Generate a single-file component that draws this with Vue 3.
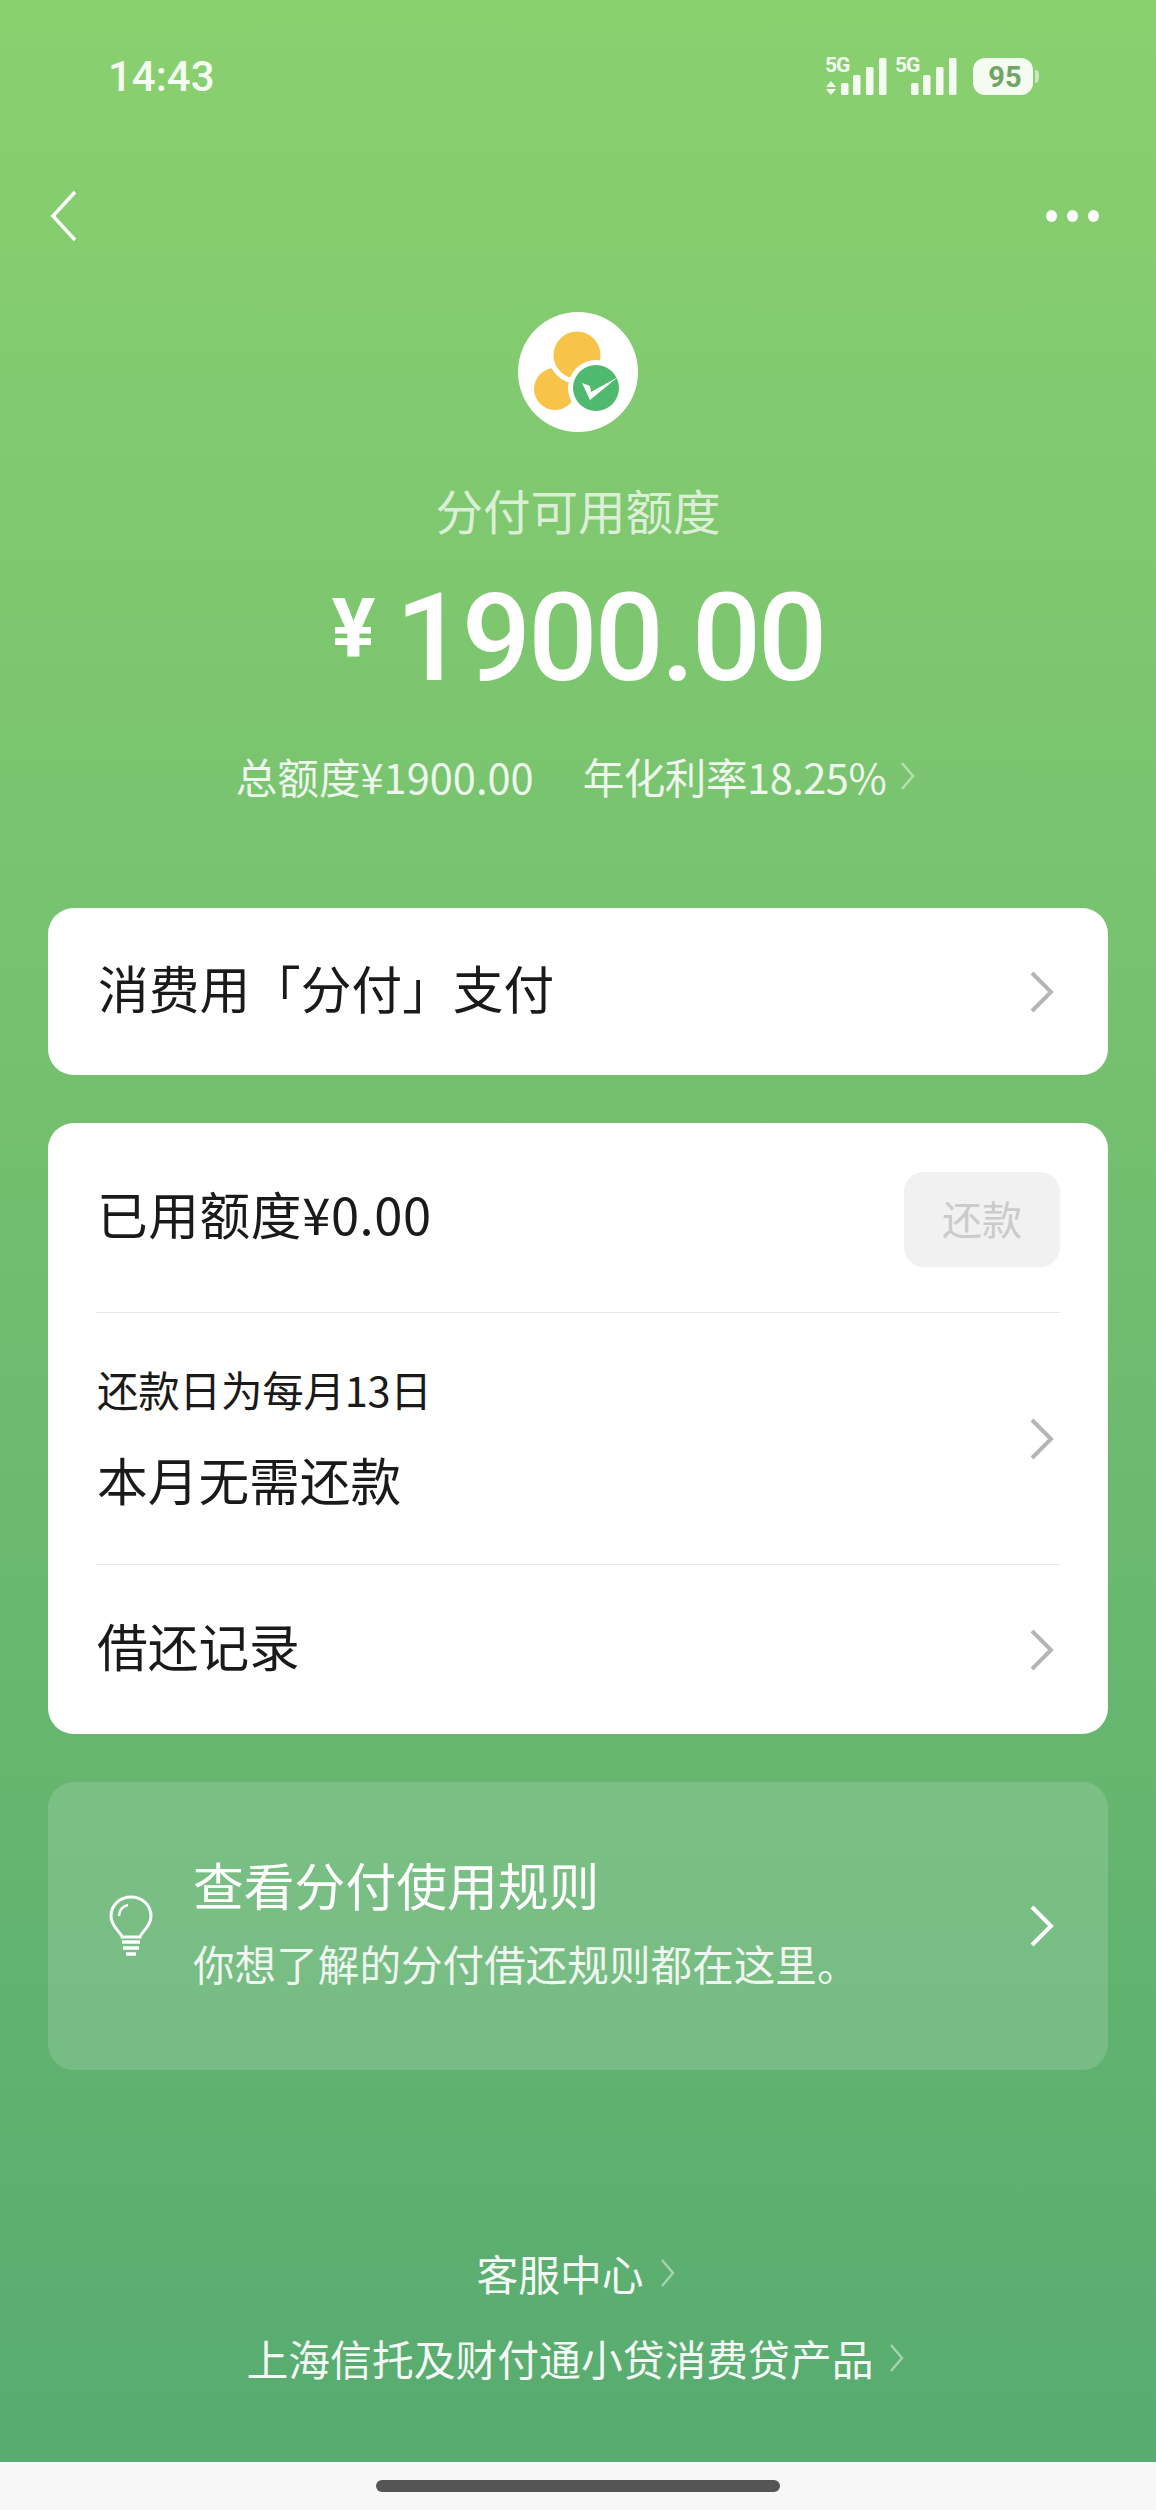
<template>
  <div class="page">
    <div class="hero">
      <div class="status">
        <span class="time">14:43</span>
        <svg class="status-icons" width="218" height="44" viewBox="0 -4 218 44">
          <g fill="#f4fbf0">
            <path d="M7 24l5 6H2zM7 38l5-6H2z" />
            <rect x="17" y="26" width="7.500" height="12" rx="1.500" />
            <rect x="29" y="18" width="7.500" height="20" rx="1.500" />
            <rect x="42" y="10" width="7.500" height="28" rx="1.500" />
            <rect x="55" y="1" width="7.500" height="37" rx="1.500" />
            <rect x="87" y="26" width="7.500" height="12" rx="1.500" />
            <rect x="99" y="18" width="7.500" height="20" rx="1.500" />
            <rect x="112" y="10" width="7.500" height="28" rx="1.500" />
            <rect x="125" y="1" width="7.500" height="37" rx="1.500" />
            <rect x="149" y="1" width="60" height="37" rx="12" />
            <path d="M211 13c3 0 4 2 4 6.500s-1 6.500-4 6.500z" opacity="0.6" />
          </g>
          <text x="1" y="15" class="net">5G</text>
          <text x="71" y="15" class="net">5G</text>
          <text x="181" y="30" class="batt" text-anchor="middle">95</text>
        </svg>
      </div>

      <div class="nav">
        <svg width="32" height="52" viewBox="0 0 32 52">
          <path d="M27 2L5 26l22 24" fill="none" stroke="#fff" stroke-width="3.500" />
        </svg>
        <div class="dots"><i></i><i></i><i></i></div>
      </div>

      <svg class="logo" width="120" height="120" viewBox="0 0 120 120">
        <circle cx="60" cy="60" r="60" fill="#fff" />
        <circle cx="37" cy="77" r="21" fill="#f8c349" />
        <circle cx="59" cy="43" r="26" fill="#f8c349" stroke="#fff" stroke-width="5" />
        <circle cx="78" cy="76" r="28" fill="#fff" />
        <circle cx="78" cy="76" r="23" fill="#4fb96d" />
        <path d="M64 71l8 3 1 6 27-15-28 23z" fill="#fff" />
      </svg>

      <div class="label">分付可用额度</div>
      <div class="amount"><span class="yen">¥</span><span>1900.00</span></div>
      <div class="summary">
        <span>总额度¥1900.00</span>
        <span class="rate">年化利率18.25%</span>
        <svg class="mini" width="16" height="30" viewBox="0 0 16 30">
          <path d="M2 2l11 13L2 28" />
        </svg>
      </div>
    </div>

    <div class="card pay">
      <span class="main">消费用「分付」支付</span>
      <svg class="arrow" width="24" height="42" viewBox="0 0 24 42"><path d="M2 2l19 19L2 40" /></svg>
    </div>

    <div class="card used">
      <div class="row first">
        <span class="main">已用额度¥0.00</span>
        <span class="repay">还款</span>
      </div>
      <div class="row second">
        <div>
          <div class="hint">还款日为每月13日</div>
          <div class="main">本月无需还款</div>
        </div>
        <svg class="arrow" width="24" height="42" viewBox="0 0 24 42"><path d="M2 2l19 19L2 40" /></svg>
      </div>
      <div class="row third">
        <span class="main">借还记录</span>
        <svg class="arrow" width="24" height="42" viewBox="0 0 24 42"><path d="M2 2l19 19L2 40" /></svg>
      </div>
    </div>

    <div class="tip">
      <svg class="bulb" width="46" height="62" viewBox="0 0 46 62" fill="none" stroke="#fff">
        <path d="M14 42c-1-5-11-10-11-21C3 10 12 2 23 2s20 8 20 19c0 11-10 16-11 21z" stroke-width="3" />
        <path d="M11 21c0-6 4-10 9-11" stroke-width="2.500" />
        <path d="M14 47h18M15 53h16" stroke-width="3.500" />
        <path d="M18 59h10" stroke-width="3.500" />
      </svg>
      <div class="tip-text">
        <div class="tip-title">查看分付使用规则</div>
        <div class="tip-sub">你想了解的分付借还规则都在这里。</div>
      </div>
      <svg class="tip-arrow" width="24" height="42" viewBox="0 0 24 42"><path d="M2 2l19 19L2 40" /></svg>
    </div>

    <div class="footer">
      <div class="link">客服中心<svg class="mini" width="16" height="30" viewBox="0 0 16 30"><path d="M2 2l11 13L2 28" /></svg></div>
      <div class="link">上海信托及财付通小贷消费贷产品<svg class="mini" width="16" height="30" viewBox="0 0 16 30"><path d="M2 2l11 13L2 28" /></svg></div>
    </div>

    <div class="home"><i></i></div>
  </div>
</template>

<script setup>
</script>

<style>
html,
body {
  margin: 0;
  background: #f7f7f7;
}
</style>

<style scoped>
.page {
  width: 1156px;
  height: 2510px;
  display: flex;
  flex-direction: column;
  background: linear-gradient(180deg, #8ad06f 0%, #57ab70 100%);
  font-family: "Noto Sans CJK SC", "Noto Sans", sans-serif;
  color: #fff;
  overflow: hidden;
}
.hero {
  display: flex;
  flex-direction: column;
  align-items: center;
  height: 908px;
}
.status {
  align-self: stretch;
  height: 152px;
  padding: 56px 114px 0 108px;
  box-sizing: border-box;
  display: flex;
  justify-content: space-between;
  align-items: flex-start;
}
.time {
  font-family: Roboto, sans-serif;
  font-size: 42px;
  font-weight: 500;
  line-height: 42px;
  color: #f4fbf0;
}
.status-icons {
  margin-top: -3px;
}
.net {
  font-family: Roboto, sans-serif;
  font-size: 21px;
  font-weight: 700;
  letter-spacing: -1px;
  fill: #f4fbf0;
}
.batt {
  font-family: Roboto, sans-serif;
  font-size: 29px;
  font-weight: 700;
  fill: #6fa565;
}
.nav {
  align-self: stretch;
  height: 160px;
  padding: 38px 57px 0 48px;
  box-sizing: border-box;
  display: flex;
  justify-content: space-between;
  align-items: flex-start;
}
.dots {
  display: flex;
  gap: 10px;
  margin-top: 20px;
}
.dots i {
  width: 11px;
  height: 12px;
  border-radius: 50%;
  background: #fff;
}
.logo {
  display: block;
}
.label {
  margin-top: 46px;
  font-size: 47.500px;
  line-height: 64px;
  color: rgba(255, 255, 255, 0.72);
}
.amount {
  margin-top: 32px;
  display: flex;
  align-items: flex-start;
  font-family: Roboto, sans-serif;
  font-weight: 500;
  font-size: 122px;
  line-height: 130px;
  letter-spacing: -3px;
}
.yen {
  font-size: 82px;
  line-height: 108px;
  font-weight: 700;
  letter-spacing: 0;
  margin-right: 20px;
}
.summary {
  margin-top: 44px;
  display: flex;
  align-items: center;
  font-size: 41.600px;
  line-height: 56px;
  color: rgba(255, 255, 255, 0.88);
}
.rate {
  margin-left: 49px;
  letter-spacing: -0.500px;
}
.mini {
  margin: 0 4px 0 14px;
  flex: none;
}
.mini path {
  fill: none;
  stroke: rgba(255, 255, 255, 0.45);
  stroke-width: 2.500;
}
.card {
  margin: 0 48px;
  background: #fff;
  border-radius: 26px;
  color: #1a1a1a;
}
.main {
  font-size: 50.700px;
  line-height: 68px;
  color: #1a1a1a;
}
.row > .main,
.pay > .main {
  margin-bottom: 9px;
}
.row .main,
.hint {
  margin-left: 1px;
}
.first .main {
  letter-spacing: 0.600px;
}
.arrow {
  flex: none;
}
.arrow path {
  fill: none;
  stroke: #b5b5b5;
  stroke-width: 4;
}
.pay {
  height: 167px;
  padding: 0 54px 0 50px;
  display: flex;
  align-items: center;
  justify-content: space-between;
}
.used {
  margin-top: 48px;
  padding: 0 48px;
}
.row {
  display: flex;
  align-items: center;
  justify-content: space-between;
}
.first {
  height: 189px;
  border-bottom: 1px solid #e6e6e6;
}
.second {
  height: 251px;
  padding-right: 6px;
  border-bottom: 1px solid #e6e6e6;
}
.third {
  height: 169px;
  padding-right: 6px;
}
.repay {
  width: 156px;
  height: 95px;
  margin-top: 3px;
  border-radius: 20px;
  background: #f1f1f1;
  color: #cbcbcb;
  font-size: 40px;
  line-height: 92px;
  text-align: center;
}
.hint {
  font-size: 41.600px;
  line-height: 56px;
  letter-spacing: -0.300px;
  color: #1a1a1a;
  margin-bottom: 25px;
  transform: translateY(-3px);
}
.tip {
  margin: 48px 48px 0;
  height: 288px;
  padding: 0 54px 0 60px;
  border-radius: 26px;
  background: rgba(255, 255, 255, 0.14);
  display: flex;
  align-items: center;
}
.bulb {
  flex: none;
}
.tip-text {
  flex: 1;
  margin: 0 0 11px 39px;
}
.tip-title {
  font-size: 50.800px;
  line-height: 68px;
}
.tip-sub {
  margin-top: 17px;
  font-size: 41.600px;
  line-height: 56px;
  color: rgba(255, 255, 255, 0.88);
}
.tip-arrow {
  flex: none;
}
.tip-arrow path {
  fill: none;
  stroke: #fff;
  stroke-width: 4;
}
.footer {
  flex: 1;
  display: flex;
  flex-direction: column;
  align-items: center;
  justify-content: flex-start;
  padding-top: 175px;
  gap: 29px;
}
.link {
  display: flex;
  align-items: center;
  font-size: 41.800px;
  line-height: 56px;
  color: rgba(255, 255, 255, 0.94);
}
.link .mini {
  margin: 0 4px 0 16px;
}
.home {
  flex: none;
  height: 48px;
  background: #f7f7f7;
  display: flex;
  justify-content: center;
  padding-top: 18px;
  box-sizing: border-box;
}
.home i {
  width: 404px;
  height: 12px;
  border-radius: 6px;
  background: #555;
}
</style>
